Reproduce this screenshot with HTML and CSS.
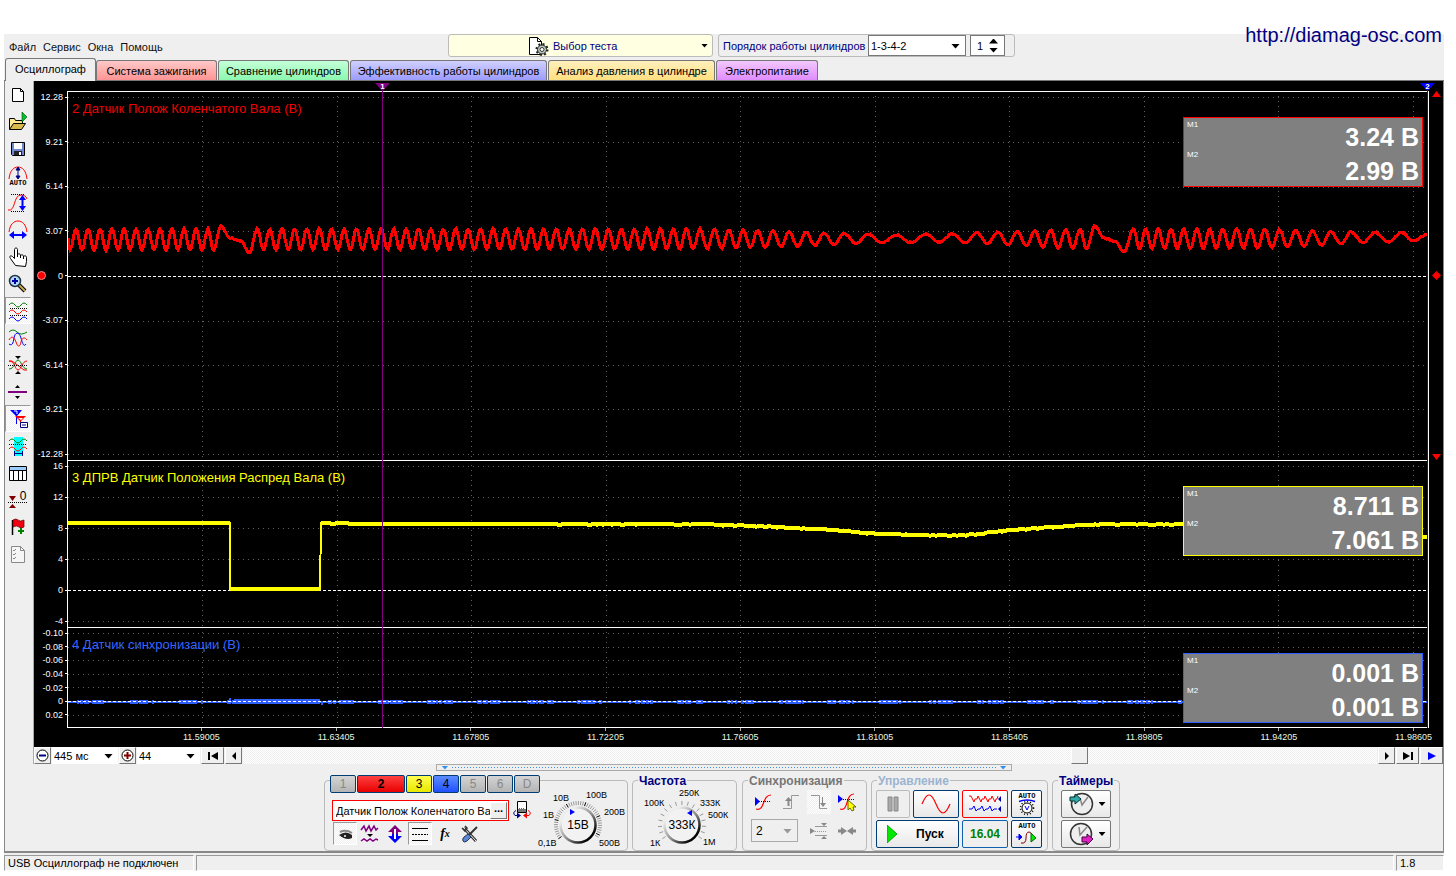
FILE: index.html
```html
<!DOCTYPE html>
<html lang="ru">
<head>
<meta charset="utf-8">
<title>Осциллограф</title>
<link rel="stylesheet" href="styles.css">
</head>
<body>
<a class="site-link" href="http://diamag-osc.com">http://diamag-osc.com</a>
<div class="app">
  <header class="topbar">
    <nav class="menu">
      <a href="#file">Файл</a><a href="#service">Сервис</a><a href="#windows">Окна</a><a href="#help">Помощь</a>
    </nav>
    <button class="test-select" type="button">
      <svg width="22" height="20" viewBox="0 0 22 20"><path d="M1.500 1.500h8l4 4v13h-12z" fill="#fff" stroke="#000"/><path d="M9.500 1.500v4h4" fill="none" stroke="#000"/><circle cx="14" cy="13.500" r="4.500" fill="#b8c8b8" stroke="#222" stroke-width="1"/><circle cx="14" cy="13.500" r="5.500" fill="none" stroke="#222" stroke-width="2" stroke-dasharray="2 2.300"/><circle cx="14" cy="13.500" r="2" fill="#fff" stroke="#333"/></svg>
      <span>Выбор теста</span><i class="arrow"></i>
    </button>
    <div class="firing">
      <label for="order">Порядок работы цилиндров</label>
      <span class="drop order"><select id="order"><option>1-3-4-2</option></select></span>
      <span class="spin"><input aria-label="Номер цилиндра" value="1"><span class="spin-btns"><button type="button" aria-label="Больше"></button><button type="button" aria-label="Меньше"></button></span></span>
    </div>
  </header>

  <nav class="tabs">
    <button class="tab active" type="button">Осциллограф</button>
    <button class="tab t-red" type="button">Система зажигания</button>
    <button class="tab t-green" type="button">Сравнение цилиндров</button>
    <button class="tab t-blue" type="button">Эффективность работы цилиндров</button>
    <button class="tab t-gold" type="button">Анализ давления в цилиндре</button>
    <button class="tab t-violet" type="button">Электропитание</button>
  </nav>

  <main class="frame">
    <div class="work">
      <aside class="tools">
        <button type="button" aria-label="Новый"><svg viewBox="0 0 22 22"><path d="M5.500 4.500h8l3 3v10h-11z" fill="#fff" stroke="#000"/><path d="M13.500 4.500v3h3" fill="none" stroke="#000"/></svg></button>
        <button type="button" aria-label="Открыть"><svg viewBox="0 0 22 22"><path d="M2.500 18.500v-11h5l1 2h7v3" fill="#ffe98c" stroke="#000"/><path d="M2.500 18.500l4-6h12l-4 6z" fill="#d8b84a" stroke="#000"/><path d="M15 1l5 5-5 5z" fill="#00c030" stroke="#040" stroke-width=".6"/></svg></button>
        <button type="button" aria-label="Сохранить"><svg viewBox="0 0 22 22"><path d="M4.500 4.500h13v13h-12l-1-1z" fill="#7088d0" stroke="#000"/><path d="M7 5h8v6H7z" fill="#fff"/><path d="M7 13h8v4H7z" fill="#222"/><path d="M12 14h2v3h-2z" fill="#fff"/></svg></button>
        <button type="button" aria-label="Авто"><svg viewBox="0 0 22 22"><path d="M2 14C3 5 7 2 11 2s8 3 9 12" fill="none" stroke="#f00"/><path d="M11 3v10M9 5l2-3 2 3zM9 11l2 3 2-3z" stroke="#000080" fill="#000080"/><text x="11" y="20" class="ico-text">AUTO</text></svg></button>
        <button type="button" aria-label="Амплитуда"><svg viewBox="0 0 22 22"><path d="M4 2.500h14M4 19.500h14" stroke="#000" stroke-dasharray="1 1"/><path d="M1 18c8 2 5-15 13-15 3 0 5 1 6 4" fill="none" stroke="#f00"/><path d="M15.500 5v12" stroke="#00f" stroke-width="2"/><path d="M12 8l3.500-5L19 8zM12 14l3.500 5 3.500-5z" fill="#00f"/></svg></button>
        <button type="button" aria-label="Развёртка"><svg viewBox="0 0 22 22"><path d="M2 13C3 5 7 2 11 2s8 3 9 11" fill="none" stroke="#f00"/><path d="M4 16h14" stroke="#00f" stroke-width="2"/><path d="M7 12l-5 4 5 4zM15 12l5 4-5 4z" fill="#00f"/></svg></button>
        <button type="button" aria-label="Рука"><svg viewBox="0 0 22 22"><path d="M8.500 19.500l-5-7c-2-3 1-3 2-2l2 2v-9c0-2 3-2 3 0v5c1-1 3-1 3 1 1-1 3-1 3 1 1-1 3-1 3 1v4c0 2-1 3-1 5z" fill="#fff" stroke="#000"/><path d="M10.500 8v3M13.500 9v3M16.500 10v3" stroke="#000"/></svg></button>
        <button type="button" aria-label="Масштаб"><svg viewBox="0 0 22 22"><path d="M12 12l6 6" stroke="#000" stroke-width="4"/><path d="M12 12l6 6" stroke="#c8a850" stroke-width="2"/><circle cx="8" cy="8" r="5.500" fill="#b0dcff" stroke="#234" stroke-width="1.500"/><path d="M8 5v6M5 8h6" stroke="#00a" stroke-width="2"/></svg></button>
        <button type="button" class="pressed" aria-label="Раздельно"><svg viewBox="0 0 22 22"><g fill="none"><path d="M2 5q3-4 6 0t6 0t6 0" stroke="#008000"/><path d="M2 12q3-4 6 0t6 0t6 0" stroke="#f00"/><path d="M2 19q3-4 6 0t6 0t6 0" stroke="#00f"/><path d="M3 8.500h17M3 15.500h17" stroke="#000" stroke-dasharray="1 1"/></g></svg></button>
        <button type="button" aria-label="Совместно"><svg viewBox="0 0 22 22"><g fill="none"><path d="M2 5q4-4 8 0t10 0" stroke="#008000"/><path d="M2 17c3 2 4 0 5-6s5-7 7 0 3 9 5 6" stroke="#00f"/><path d="M2 13c2-4 5-4 7 2s4 5 5 0 4-5 6-2" stroke="#f00"/></g></svg></button>
        <button type="button" aria-label="Центр"><svg viewBox="0 0 22 22"><path d="M2 7h3l12 9h3" fill="none" stroke="#f00"/><path d="M2 15c6 0 6-9 9-9s4 9 9 9" fill="none" stroke="#008000"/><path d="M2 7c6 0 6 9 9 9s4-9 9-9" fill="none" stroke="#f00"/><path d="M1 11.500h20" stroke="#000" stroke-dasharray="1 1"/><path d="M8 2h6l-3 3zM8 20h6l-3-3z"/></svg></button>
        <button type="button" aria-label="Разделитель"><svg viewBox="0 0 22 22"><path d="M1 11h19" stroke="#800080" stroke-width="2"/><path d="M8 7h5l-2.500-3zM8 15h5l-2.500 3z"/></svg></button>
        <button type="button" class="pressed" aria-label="Маркеры"><svg viewBox="0 0 22 22"><path d="M3 2h12l-5 6v8H9V8z" fill="#00f"/><path d="M7 3h3v3" fill="none" stroke="#fff"/><path d="M8 8h11l-5 5v5h-1v-5z" fill="#f00"/><path d="M11 10h5l-2 2z" fill="#fff"/><path d="M13.500 14.500h7v5h-7z" fill="#fff" stroke="#000080"/><path d="M15 17h4" stroke="#000080"/></svg></button>
        <button type="button" aria-label="Участок"><svg viewBox="0 0 22 22"><path d="M7 2h9v19H7z" fill="#0ff"/><g fill="none"><path d="M2 6q3-4 6 0t6 0t6 0" stroke="#008000"/><path d="M2 14q3-4 6 0t6 0t6 0" stroke="#f00"/><path d="M2 9.500h18" stroke="#000" stroke-dasharray="1 1"/><path d="M7.500 16v5M15.500 16v5M8 18.500h7" stroke="#000080"/></g></svg></button>
        <button type="button" aria-label="Таблица"><svg viewBox="0 0 22 22"><path d="M2.500 4.500h17v14h-17z" fill="#fff" stroke="#000"/><path d="M3 5h16v3H3z" fill="#9cf"/><path d="M2 8.500h18M6.500 8v10M11.500 8v10M15.500 8v10" stroke="#000"/></svg></button>
        <button type="button" aria-label="Ноль"><svg viewBox="0 0 22 22"><path d="M2 7h7L5.500 12zM2 19h7l-3.500-4z" fill="#800000"/><path d="M1 13.500h19" stroke="#000" stroke-dasharray="1 1"/><text x="16" y="11" class="ico-zero">0</text></svg></button>
        <button type="button" aria-label="Флаг"><svg viewBox="0 0 22 22"><path d="M5.500 4v15" stroke="#000" stroke-width="1.500"/><path d="M6 4q3-2 5 0t6 0v7q-3 2-5 0t-6 0z" fill="#f00010" stroke="#600" stroke-width=".7"/><path d="M14 12v6M11 15h6" stroke="#008000" stroke-width="2"/></svg></button>
        <button type="button" aria-label="Отчёт"><svg viewBox="0 0 22 22"><path d="M4.500 3.500h9l4 4v12h-13z" fill="#f6f6f6" stroke="#888"/><path d="M13.500 3.500v4h4M6 7l1 1 2-2M6 11l1 1 2-2M6 15l1 1 2-2" fill="none" stroke="#888"/></svg></button>
      </aside>

      <section class="scope-col">
        <div class="scope">
          <div class="yaxis row1"><i class="zero-dot"></i><ol class="ticks"><li>12.28</li><li>9.21</li><li>6.14</li><li>3.07</li><li>0</li><li>-3.07</li><li>-6.14</li><li>-9.21</li><li>-12.28</li></ol></div>
          <div class="pane row1">
            <svg class="trace" viewBox="68 92 1360 368" preserveAspectRatio="none"><g class="grid" id="grid1"></g><path id="crank" class="line-red"/></svg>
            <h2 class="name red">2 Датчик Полож Коленчатого Вала (В)</h2>
            <div class="readout red-box"><div class="marks"><span>M1</span><span>M2</span></div><div class="vals"><b>3.24 В</b><b>2.99 В</b></div></div>
          </div>
          <div class="limits row1"><svg width="9" height="6"><path d="M0 6L4.500 0 9 6z"/></svg><svg width="9" height="9"><path d="M0 4.500L4.500 0 9 4.500 4.500 9z"/></svg><svg width="9" height="6"><path d="M0 0h9L4.500 6z"/></svg></div>

          <div class="yaxis row2"><ol class="ticks"><li>16</li><li>12</li><li>8</li><li>4</li><li>0</li><li>-4</li></ol></div>
          <div class="pane row2">
            <svg class="trace" viewBox="68 461 1360 166" preserveAspectRatio="none"><g class="grid" id="grid2"></g><path id="cam" class="line-yellow"/><path d="M230 522V590M320 590L321 522" class="edge-yellow"/></svg>
            <h2 class="name yellow">3 ДПРВ Датчик Положения Распред Вала (В)</h2>
            <div class="readout yellow-box"><div class="marks"><span>M1</span><span>M2</span></div><div class="vals"><b>8.711 В</b><b>7.061 В</b></div></div>
          </div>

          <div class="yaxis row3"><ol class="ticks"><li>-0.10</li><li>-0.08</li><li>-0.06</li><li>-0.04</li><li>-0.02</li><li>0</li><li>0.02</li></ol></div>
          <div class="pane row3">
            <svg class="trace" viewBox="68 628 1360 99" preserveAspectRatio="none"><path id="sync" class="line-blue"/><g class="grid" id="grid3"></g></svg>
            <h2 class="name blue">4 Датчик синхронизации (В)</h2>
            <div class="readout blue-box"><div class="marks"><span>M1</span><span>M2</span></div><div class="vals"><b>0.001 В</b><b>0.001 В</b></div></div>
          </div>

          <div class="xline"></div>
          <ol class="xaxis"><li>11.59005</li><li>11.63405</li><li>11.67805</li><li>11.72205</li><li>11.76605</li><li>11.81005</li><li>11.85405</li><li>11.89805</li><li>11.94205</li><li>11.98605</li></ol>
          <div class="cursors"><div class="cursor c1"><span>1</span></div><div class="cursor c2"><span>2</span></div></div>
        </div>

        <div class="scroll-row">
          <button class="b3d sq" type="button" aria-label="Уменьшить"><svg width="13" height="13"><circle cx="6.500" cy="6.500" r="5.500" fill="#fff" stroke="#000"/><path d="M3 6.500h7" stroke="#000080" stroke-width="2"/></svg></button>
          <span class="drop span-t"><select aria-label="Развёртка времени"><option>445 мс</option></select></span>
          <button class="b3d sq" type="button" aria-label="Увеличить"><svg width="13" height="13"><circle cx="6.500" cy="6.500" r="5.500" fill="#fff" stroke="#000"/><path d="M3 6.500h7M6.500 3v7" stroke="#800000" stroke-width="2"/></svg></button>
          <span class="drop span-n"><select aria-label="Деление"><option>44</option></select></span>
          <button class="b3d wide" type="button" aria-label="В начало"><svg width="12" height="8"><path d="M1 0h2v8H1zM11 0v8L4 4z"/></svg></button>
          <button class="b3d sq" type="button" aria-label="Назад"><svg width="6" height="8"><path d="M5 0v8L1 4z"/></svg></button>
          <input class="track" type="range" aria-label="Позиция" min="0" max="1000" value="741">
          <button class="b3d sq" type="button" aria-label="Вперёд"><svg width="6" height="8"><path d="M1 0v8l4-4z"/></svg></button>
          <button class="b3d wide" type="button" aria-label="В конец"><svg width="12" height="8"><path d="M1 0v8l7-4zM9 0h2v8H9z"/></svg></button>
          <button class="b3d wide" type="button" aria-label="Воспроизвести"><svg width="10" height="8"><path d="M1 0v8l8-4z" fill="#00f"/></svg></button>
        </div>
      </section>
    </div>

    <div class="splitter"><i></i><span></span><i></i></div>

    <div class="panel">
      <section class="group channel">
        <div class="ch-left">
          <div class="ch-btns">
            <button type="button" class="off">1</button><button type="button" class="ch2">2</button><button type="button" class="ch3">3</button><button type="button" class="ch4">4</button><button type="button" class="off">5</button><button type="button" class="off">6</button><button type="button" class="off">D</button>
          </div>
          <div class="ch-name">
            <span class="field"><input aria-label="Имя канала" value="Датчик Полож Коленчатого Вала"><button type="button" class="b3d dots">...</button></span>
            <svg width="20" height="20" viewBox="0 0 20 20"><path d="M5.500 1.500h9v11h-9z" fill="#fff" stroke="#000"/><path d="M6 9h8v3H6z" fill="#777"/><path d="M7 8.500h6" stroke="#0a0" stroke-dasharray="1 1"/><path d="M4 10.500q-4 2-1 5h3" stroke="#000080" fill="none"/><path d="M5 12.500l4 3-4 3z" fill="#000080"/><path d="M16 10.500q4 2 1 5h-3" stroke="#f00" fill="none"/><path d="M15 12.500l-4 3 4 3z" fill="#f00"/></svg>
          </div>
          <div class="ch-tools">
            <button type="button" class="pressed" aria-label="Видимость"><svg viewBox="0 0 20 20"><path d="M5 8q6-3 12 1" fill="none" stroke="#888" stroke-width="2"/><path d="M4 11q7-5 13 0v3q-6 3-13-3z" fill="#222"/><circle cx="10" cy="12" r="1" fill="#fff"/></svg></button>
            <button type="button" aria-label="Сглаживание"><svg viewBox="0 0 20 20"><path d="M1 6l3-4 2 5 3-5 2 5 3-5 2 4 2-2M1 17l3-2 3 2 3-2 3 2 3-2 2 1" fill="none" stroke="#800080" stroke-width="1.500"/><path d="M7 10h6l-3 3z"/></svg></button>
            <button type="button" aria-label="Смещение"><svg viewBox="0 0 20 20"><path d="M10 1l7 7h-4v2H7V8H3z" fill="#800080"/><path d="M10 19l7-7h-4v-2H7v2H3z" fill="#00f"/><path d="M10 5v10" stroke="#fff" stroke-width="2"/></svg></button>
            <button type="button" class="pressed" aria-label="Линии"><svg viewBox="0 0 20 20"><path d="M2 4.500h16M2 16.500h16" stroke="#000"/><path d="M2 10.500h16" stroke="#000" stroke-dasharray="2 1"/></svg></button>
            <button type="button" class="fx" aria-label="Функция"><i>f</i><small>x</small></button>
            <button type="button" aria-label="Настройка"><svg viewBox="0 0 20 20"><path d="M4 4l12 13" stroke="#333" stroke-width="3"/><path d="M4 4l12 13" stroke="#eee"/><path d="M2 4l3 3 2-3-2-2" fill="none" stroke="#333" stroke-width="1.500"/><path d="M17 3l-9 9" stroke="#333" stroke-width="2"/><path d="M8 10l3 3-4 4q-3 2-4 0t1-4z" fill="#5b86d0" stroke="#235"/></svg></button>
          </div>
        </div>
        <svg class="knob" width="87" height="69" viewBox="540 781 87 69" data-cx="578" data-cy="825" data-dot="-8 -13">
          <text x="538" y="846">0,1В</text><text x="543" y="818">1В</text><text x="553" y="801">10В</text><text x="586" y="798">100В</text><text x="604" y="815">200В</text><text x="599" y="846">500В</text><text class="kv" x="578" y="829">15В</text>
        </svg>
      </section>

      <section class="group freq">
        <h3>Частота</h3>
        <svg class="knob" width="103" height="62" viewBox="633 788 103 62" data-cx="682" data-cy="825" data-dot="8 -12">
          <text x="650" y="846">1К</text><text x="644" y="806">100К</text><text x="679" y="796">250К</text><text x="700" y="806">333К</text><text x="708" y="818">500К</text><text x="703" y="845">1М</text><text class="kv" x="682" y="829">333К</text>
        </svg>
      </section>

      <section class="group sync">
        <h3 class="dim">Синхронизация</h3>
        <div class="sync-grid">
          <button type="button" aria-label="Синхронизация"><svg viewBox="0 0 20 20"><path d="M3 17c9 3 6-14 15-14" fill="none" stroke="#f00" stroke-width="1.200"/><path d="M4 9.500h14" stroke="#00a" stroke-dasharray="1 1"/><path d="M2 5l5 4.500L2 14z" fill="#00f"/></svg></button>
          <button type="button" aria-label="По фронту"><svg viewBox="0 0 20 20"><path d="M2 16.500h8.500v-13H18" fill="none" stroke="#999"/><path d="M7.500 14V7" stroke="#888" stroke-width="2"/><path d="M4 9l3.500-4L11 9z" fill="#888"/></svg></button>
          <button type="button" class="hatch" aria-label="По спаду"><svg viewBox="0 0 20 20"><path d="M2 3.500h8.500v13H18" fill="none" stroke="#999"/><path d="M13.500 5v8" stroke="#888"/><path d="M11 11h6l-3 4z" fill="#888"/></svg></button>
          <button type="button" aria-label="Выбор уровня"><svg viewBox="0 0 20 20"><path d="M3 17c9 3 5-15 14-15" fill="none" stroke="#f00" stroke-width="1.200"/><path d="M2 7.500h16" stroke="#00a" stroke-dasharray="1 1"/><path d="M1 3l5 4-5 4z" fill="#00f"/><path d="M11 8v10l2-2 2 3 2-1-1-3h3z" fill="#ff0" stroke="#440" stroke-width=".8"/></svg></button>
          <span class="drop sync-ch"><select aria-label="Канал синхронизации"><option>2</option></select></span>
          <button type="button" aria-label="Уровень"><svg viewBox="0 0 20 20"><path d="M6 5.500h12M6 14.500h12" stroke="#999"/><path d="M6 10.500h12" stroke="#999" stroke-dasharray="1 1"/><path d="M1 7l5 3-5 3zM12 2h6l-3 3zM12 18h6l-3-3z" fill="#888"/></svg></button>
          <button type="button" aria-label="Сжать"><svg viewBox="0 0 20 20"><path d="M1 10h4M15 10h4" stroke="#888" stroke-width="3"/><path d="M4 6l6 4-6 4zM16 6l-6 4 6 4z" fill="#888"/></svg></button>
        </div>
      </section>

      <section class="group control">
        <h3 class="pale">Управление</h3>
        <div class="ctl-grid">
          <button class="cbtn gray" type="button" aria-label="Пауза"><svg width="14" height="18"><path d="M2 2h4v14H2zM8 2h4v14H8z" fill="#aaa" stroke="#888"/></svg></button>
          <button class="cbtn" type="button" aria-label="Один кадр"><svg width="30" height="20"><path d="M1 10C6-2 10-2 15 10s9 12 14 0" fill="none" stroke="#f00" stroke-width="1.200"/></svg></button>
          <button class="cbtn redb" type="button" aria-label="Запись"><svg width="34" height="20"><path d="M1 2h2l3 6 1-3h2l1-3 3 6 1-3h2l1-3 3 6 1-3h2l1-3 3 6 1-3h1l1-3" fill="none" stroke="#f00"/><path d="M1 15h3l2-3 2 5 2-2h2l2-3 2 5 2-2h2l2-3 2 5 2-2h3" fill="none" stroke="#00f"/><path d="M33 2v6l-3-3zM33 12v6l-3-3z" fill="#00a"/></svg></button>
          <button class="cbtn" type="button" aria-label="Авто масштаб"><svg width="24" height="24"><text x="12" y="6" class="ico-text">AUTO</text><path d="M4 9.500q8-3 16 0" stroke="#00f" fill="none" stroke-width="1.500"/><circle cx="12" cy="16" r="5" fill="#fff" stroke="#000"/><circle cx="12" cy="16" r="6.500" fill="none" stroke="#000" stroke-width="1.500" stroke-dasharray="1 2"/><path d="M10 14l2 4 2-4" fill="none" stroke="#00f"/></svg></button>
          <button class="cbtn start" type="button"><svg width="10" height="18"><path d="M0 0v18l10-9z" fill="#00e800" stroke="#0a0"/></svg><b>Пуск</b></button>
          <button class="cbtn ver" type="button">16.04</button>
          <button class="cbtn" type="button" aria-label="Авто запуск"><svg width="24" height="24"><text x="12" y="6" class="ico-text">AUTO</text><path d="M6 21q5 1 5-5t3-6 4 7" fill="none" stroke="#800000"/><path d="M1 15h4M4 12l3 3-3 3z" fill="#00f" stroke="#00f"/><path d="M16 11v9l5-4z" fill="#0e0" stroke="#060"/></svg></button>
        </div>
      </section>

      <section class="group timers">
        <h3>Таймеры</h3>
        <div class="timer-list">
          <button class="cbtn tm" type="button" aria-label="Таймер начала"><svg width="28" height="24"><circle cx="15" cy="12" r="10.500" fill="#eee" stroke="#333" stroke-width="1.500"/><path d="M13 6l2 7 6-8" stroke="#888" fill="none" stroke-width="1.500"/><path d="M3 5h5V2l6 5-6 5V9H3z" fill="#3aa" stroke="#033"/></svg><i class="arrow"></i></button>
          <button class="cbtn tm" type="button" aria-label="Таймер конца"><svg width="28" height="24"><circle cx="14" cy="12" r="10.500" fill="#eee" stroke="#333" stroke-width="1.500"/><path d="M12 5l1 8 7-8" stroke="#888" fill="none" stroke-width="1.500"/><path d="M15 15h5v-3l6 5-6 6v-3h-5z" fill="#e020c0" stroke="#404"/></svg><i class="arrow"></i></button>
        </div>
      </section>
    </div>
  </main>

  <footer class="status"><span class="s1">USB Осциллограф не подключен</span><span class="s2"></span><span class="s3">1.8</span></footer>
</div>
<script src="scope.js"></script>
</body>
</html>
```
FILE: styles.css
```css
* { box-sizing: border-box; }
body {
  margin: 0;
  padding: 34px 12px 5px 4px;
  min-height: 100vh;
  display: flex;
  flex-direction: column;
  background: #fff;
  font: 11px/14px "Liberation Sans", Arial, sans-serif;
  color: #000;
}
button, input, select { font: inherit; color: inherit; margin: 0; }
button { padding: 0; background: none; border: 0; display: flex; align-items: center; justify-content: center; white-space: nowrap; }
ol { list-style: none; margin: 0; padding: 0; }
h2, h3 { margin: 0; }
.site-link {
  position: absolute;
  top: 23px;
  right: 14px;
  font-size: 20px;
  line-height: 24px;
  color: #000080;
  text-decoration: none;
}
.app { flex: 1; display: flex; flex-direction: column; background: #efefef; }

/* top bar */
.topbar { display: flex; height: 24px; align-items: flex-start; }
.menu { display: flex; gap: 7px; padding: 6px 0 0 5px; width: 444px; }
.menu a { color: #111; text-decoration: none; }
.test-select {
  width: 265px; height: 23px;
  background: #ffffe1;
  border: 1px solid #bbb; border-radius: 3px;
  color: #000080;
  gap: 3px;
  padding-left: 79px;
}
.test-select .arrow { margin: 0 4px 0 auto; }
.test-select svg { flex: none; }
.arrow { width: 7px; height: 4px; background: #000; clip-path: polygon(0 0, 100% 0, 50% 100%); }
.firing {
  display: flex; align-items: center;
  margin-left: 5px; height: 23px; width: 297px;
  border: 1px solid #bbb; border-radius: 3px;
  padding-left: 4px;
  color: #000080;
}
.firing .order { width: 98px; height: 21px; margin-left: auto; border: 1px solid #777; }
.drop { position: relative; display: flex; color: #000; }
.drop select { appearance: none; width: 100%; height: 100%; border: 0; border-radius: 0; background: #fff; padding: 0 2px; }
.drop::after {
  content: ""; position: absolute; right: 5px; top: 50%; margin-top: -2px;
  width: 9px; height: 5px; background: #000;
  clip-path: polygon(0 0, 100% 0, 50% 100%);
}
.spin { display: flex; width: 35px; height: 21px; margin: 0 9px 0 4px; border: 1px solid #777; background: #fff; color: #000; }
.spin input { width: 18px; border: 0; padding: 0 0 0 6px; background: none; }
.spin-btns { display: flex; flex-direction: column; justify-content: center; gap: 4px; }
.spin-btns button { width: 9px; height: 5px; background: #000; clip-path: polygon(50% 0, 100% 100%, 0 100%); }
.spin-btns button + button { clip-path: polygon(0 0, 100% 0, 50% 100%); }

/* tabs */
.tabs { display: flex; align-items: flex-end; height: 23px; gap: 1px; padding-left: 1px; border-bottom: 1px solid #777; }
.tab {
  height: 20px;
  border: 1px solid #777; border-bottom: 0; border-radius: 3px 3px 0 0;
}
.tab.active { height: 23px; width: 91px; margin-bottom: -1px; background: #efefef; padding-bottom: 2px; }
.tab.active + .tab { margin-left: -1px; }
.t-red { background: linear-gradient(#ffc8c8, #ff9494); width: 121px; }
.t-green { background: linear-gradient(#c4ffd8, #8cf8b0); width: 131px; }
.t-blue { background: linear-gradient(#d0d0ff, #9c9cff); width: 197px; }
.t-gold { background: linear-gradient(#fff0bc, #ffdf80); width: 167px; }
.t-violet { background: linear-gradient(#f2c8ff, #e08cff); width: 102px; }

/* frame */
.frame { flex: 1; display: flex; flex-direction: column; border: 1px solid #888; border-width: 0 1px 2px; }
.work { flex: 1; display: flex; }
.tools { width: 29px; display: flex; flex-direction: column; border-right: 1px solid #aaa; }
.tools button { height: 27px; width: 26px; }
.tools svg { width: 22px; height: 22px; }
.tools .pressed, .ch-tools .pressed { border: 1px solid; border-color: #999 #fff #fff #999; }
.pressed, .hatch { background: conic-gradient(#fff 25%, #efefef 0 50%, #fff 0 75%, #efefef 0) 0 0 / 2px 2px; }
.ico-text { font: bold 7px "Liberation Mono", monospace; text-anchor: middle; }
.ico-zero { font: 12px "Liberation Sans", sans-serif; text-anchor: middle; }

/* oscilloscope */
.scope-col { flex: 1; display: flex; flex-direction: column; min-width: 0; }
.scope {
  flex: 1;
  display: grid;
  grid-template-columns: 33px 1fr 14px;
  grid-template-rows: 10px 369fr 167fr 100fr 1px 19px;
  background: #000;
  color: #fff;
}
.row1 { grid-row: 2; } .row2 { grid-row: 3; } .row3 { grid-row: 4; }
.yaxis { grid-column: 1; display: grid; }
.yaxis > * { grid-area: 1 / 1; }
.zero-dot { width: 9px; height: 9px; border-radius: 50%; background: #f00; border: 1px solid #f88; align-self: center; margin-left: 3px; }
.ticks { display: flex; flex-direction: column; justify-content: space-between; font-size: 9px; }
.ticks li { display: flex; align-items: center; justify-content: flex-end; height: 12px; line-height: 12px; gap: 2px; }
.ticks li::after { content: ""; width: 2px; height: 1px; background: #fff; }
.row3 .ticks { padding-bottom: 6px; }
.pane { grid-column: 2; position: relative; border: 1px solid #fff; border-bottom: 0; display: flex; justify-content: space-between; align-items: flex-start; }
.trace { position: absolute; inset: 0; width: 100%; height: 100%; shape-rendering: crispEdges; }
.trace path { fill: none; }
.grid path { stroke: #606060; stroke-dasharray: 1 4; }
.grid path.zero { stroke: #fff; stroke-dasharray: 3 2; }
.line-red { stroke: #f00; stroke-width: 3; }
.line-yellow { stroke: #ff0; stroke-width: 4; }
.edge-yellow { stroke: #ff0; stroke-width: 2; }
.line-blue { stroke: #2f60ff; stroke-width: 2; }
.name { position: relative; padding: 8px 0 0 4px; font-weight: normal; font-size: 13px; line-height: 18px; }
.red { color: #f00000; } .yellow { color: #ff0; } .blue { color: #3264ff; }
.readout {
  position: relative; width: 240px; height: 70px; margin: 25px 5px 0 0;
  background: #808080; border: 1px solid;
  display: flex; justify-content: space-between;
}
.marks { display: flex; flex-direction: column; gap: 18px; padding: 1px 3px; font-size: 8px; line-height: 12px; color: #fff; }
.vals { display: flex; flex-direction: column; padding: 2px 3px; color: #fff; font-size: 25px; line-height: 34px; text-align: right; }
.red-box { border-color: #f00; } .yellow-box { border-color: #ff0; } .blue-box { border-color: #2f60ff; }
.limits { grid-column: 3; display: flex; flex-direction: column; justify-content: space-between; align-items: center; fill: #f00; }
.xline { grid-column: 2; grid-row: 5; background: #fff; }
.xaxis { grid-column: 2 / 4; grid-row: 6; display: flex; justify-content: space-between; padding: 0 11px 0 116px; font-size: 9px; color: #e8f8e0; }
.xaxis li { display: flex; flex-direction: column; align-items: center; line-height: 12px; }
.xaxis li::before { content: ""; width: 1px; height: 3px; background: #aaa; }
.cursors { grid-column: 2; grid-row: 1 / 6; position: relative; }
.cursor { position: absolute; top: 8px; bottom: 0; width: 1px; }
.cursor span {
  position: absolute; left: -7px; top: -6px; width: 15px; height: 8px;
  background: inherit; clip-path: polygon(0 0, 100% 0, 50% 100%);
  font-size: 8px; line-height: 8px; font-weight: bold; text-align: center; color: #fff;
}
.c1 { left: 23.13%; background: #800080; }
.c2 { left: 99.85%; background: #00f; }

/* scroll row */
.scroll-row { display: flex; height: 17px; gap: 1px; }
.b3d { background: #efefef; border: 1px solid; border-color: #fff #777 #777 #fff; }
.sq { width: 17px; flex: none; }
.wide { width: 23px; flex: none; }
.span-t { width: 66px; } .span-n { width: 63px; }
.track {
  flex: 1; min-width: 0; appearance: none; height: 17px;
  background: conic-gradient(#fff 25%, #efefef 0 50%, #fff 0 75%, #efefef 0) 0 0 / 2px 2px;
}
.track::-webkit-slider-thumb {
  appearance: none; width: 17px; height: 17px;
  background: #efefef; border: 1px solid; border-color: #fff #777 #777 #fff;
}

/* bottom panel */
.splitter {
  align-self: center; width: 40%; height: 7px;
  border: 1px solid #aaa;
  display: flex; align-items: center; gap: 4px; padding: 0 4px;
}
.splitter i { width: 7px; height: 4px; background: #2f90f0; clip-path: polygon(0 0, 100% 0, 50% 100%); }
.splitter span { flex: 1; height: 1px; background: repeating-linear-gradient(90deg, #4090e8 0 1px, transparent 1px 3px); }
.panel { display: flex; justify-content: center; gap: 4px; padding: 9px 4px 0 0; }
.group { border: 1px solid #bbb; border-radius: 4px; height: 71px; }
h3 { width: max-content; margin: -7px 0 0 5px; padding: 0 1px; background: #efefef; color: #000080; font-size: 12px; line-height: 14px; }
h3.dim { color: #777; } h3.pale { color: #9cb4d0; }
.channel { width: 304px; display: flex; padding-left: 5px; }
.ch-left { width: 210px; }
.ch-btns { display: flex; gap: 1px; margin-top: -6px; background: #efefef; }
.ch-btns button { flex: 1; height: 18px; border: 1px solid #003c74; border-radius: 2px; font-size: 12px; }
.ch-btns .off { background: linear-gradient(#d4d4d4, #b4b4b4); color: #888; }
.ch-btns .ch2 { flex: none; width: 48px; font-weight: bold; background: linear-gradient(#ff4040, #e80000); }
.ch-btns .ch3 { background: linear-gradient(#ffff50, #e8e800); }
.ch-btns .ch4 { background: linear-gradient(#5c8cff, #2050ff); }
.ch-name { display: flex; gap: 3px; padding: 7px 0 0 2px; }
.field { display: flex; width: 177px; height: 21px; border: 1px solid #f00; background: #fff; padding: 1px; }
.field input { flex: 1; min-width: 0; border: 0; padding: 0 0 0 2px; background: none; }
.dots { width: 17px; font-weight: bold; padding-bottom: 5px; }
.ch-tools { display: flex; padding: 1px 0 0 3px; gap: 1px; }
.ch-tools button { width: 24px; height: 23px; }
.ch-tools svg { width: 20px; height: 20px; }
.ch-tools .fx { font: bold 14px/16px "Liberation Serif", serif; }
.fx small { font-size: 10px; font-style: italic; }
.knob { display: block; overflow: visible; font-size: 9px; }
.knob .kv { font-size: 12px; text-anchor: middle; }
.freq { width: 105px; }
.sync { width: 125px; margin-left: 1px; }
.sync-grid { display: grid; grid-template-columns: repeat(4, 24px); column-gap: 4px; row-gap: 5px; padding: 2px 0 0 8px; }
.sync-grid button { width: 24px; height: 24px; }
.sync-grid svg { width: 20px; height: 20px; }
.sync-ch { grid-column: 1 / 3; width: 47px; height: 23px; border: 1px solid #aaa; }
.sync-ch select { background: #efefef; padding-left: 4px; font-size: 12px; }
.sync-ch::after { background: #999; }
.control { width: 177px; }
.ctl-grid { display: grid; grid-template-columns: 34px 46px 46px 31px; gap: 2px 3px; padding: 2px 0 0 4px; }
.cbtn { height: 28px; border: 1px solid #003c74; border-radius: 2px; background: linear-gradient(#fff, #e8e8e8); }
.gray { border-color: #bbb; background: #efefef; }
.redb { border-color: #f00; }
.start { grid-column: 1 / 3; justify-content: flex-start; padding-left: 10px; gap: 19px; font-size: 12px; }
.ver { border-color: #1060b0; background: #efefef; color: #008000; font-weight: bold; font-size: 12px; }
.timers { width: 68px; }
.timer-list { display: flex; flex-direction: column; gap: 2px; padding: 2px 0 0 8px; }
.tm { width: 50px; border-color: #777; gap: 4px; }

/* status bar */
.status { display: flex; gap: 2px; height: 18px; padding-top: 2px; }
.status span { border: 1px solid; border-color: #999 #fff #fff #999; padding: 0 3px; }
.s1 { width: 190px; } .s2 { flex: 1; } .s3 { width: 48px; }
```
FILE: scope.js
```js
const NS = 'http://www.w3.org/2000/svg';
let seed = 7;
const rnd = () => (seed = (seed * 16807) % 2147483647) / 2147483647;

function grid(id, ys, zero, top, bottom) {
  const g = document.getElementById(id);
  const add = (d, cls) => {
    const p = document.createElementNS(NS, 'path');
    p.setAttribute('d', d);
    if (cls) p.setAttribute('class', cls);
    g.appendChild(p);
  };
  for (let i = 0; i < 10; i++) add(`M${Math.round(202 + i * 134.55) + 0.5} ${top}V${bottom}`);
  ys.forEach(y => add(`M68 ${y + 0.5}H1428`, y === zero ? 'zero' : ''));
}
grid('grid1', [97, 142, 187, 231, 276, 321, 365, 409, 454], 276, 96, 460);
grid('grid2', [466, 497, 528, 559, 590, 621], 590, 465, 627);
grid('grid3', [633, 647, 660, 674, 687, 701, 715], 701, 632, 727);

// crank sensor: extrema of the toothed wheel signal joined by half cosines
const interp = (pts, x) => {
  for (let i = 1; i < pts.length; i++) {
    if (x <= pts[i][0]) {
      const [a, b] = [pts[i - 1], pts[i]];
      return a[1] + (b[1] - a[1]) * (x - a[0]) / (b[0] - a[0]);
    }
  }
  return pts[pts.length - 1][1];
};
const hi = [[60, 229], [700, 229], [775, 231], [823, 233], [894, 235], [978, 233], [1035, 231], [1080, 229], [1260, 229], [1312, 231], [1351, 232], [1440, 233]];
const lo = [[60, 250], [700, 249], [800, 246], [870, 243], [940, 242], [1000, 244], [1042, 247], [1086, 249], [1260, 248], [1312, 246], [1351, 243], [1440, 241]];
function run(peaks) {
  const out = [];
  peaks.forEach((p, i) => {
    if (i) { const m = (p + peaks[i - 1]) / 2; out.push([m, interp(lo, m)]); }
    out.push([p, interp(hi, p)]);
  });
  return out;
}
const series = (from, step, n) => Array.from({ length: n }, (_, i) => from + step * i);
const part1 = series(76, 12, 12);
const part2 = [...series(257.3, 12.4, 17), ...series(468, 12.6, 8), ...series(569.3, 13, 10), ...series(700, 14.4, 5),
  773, 789, 806, 824, 844, 868, 896, 926, 953, 977, 998, 1017.5, 1035, 1050.7, 1065.7, 1080];
const part3 = [1133.5, 1145.7, 1158.3, 1171, 1183.7, 1197, 1209.7, 1222.7, 1236.7, 1250.3, 1264.7, 1279.3, 1295.7, 1312.3, 1330.7, 1351, 1375, 1401.7];
const pts = [[68, 239], [70, 250], ...run(part1), [213.5, 250], [221, 226], [230, 238], [241, 241], [249.3, 253],
  ...run(part2), [1086.5, 249], [1094.7, 226], [1104, 238], [1115, 241], [1124, 252], ...run(part3), [1413, 241], [1428, 234]];
let d = '', k = 0;
for (let x = 68; x <= 1428; x += 1) {
  while (k < pts.length - 2 && x > pts[k + 1][0]) k++;
  const [a, b] = [pts[k], pts[k + 1]];
  const t = Math.min(1, Math.max(0, (x - a[0]) / (b[0] - a[0])));
  const y = a[1] + (b[1] - a[1]) * (1 - Math.cos(Math.PI * t)) / 2 + (rnd() - 0.5);
  d += (d ? 'L' : 'M') + x + ' ' + y.toFixed(1);
}
document.getElementById('crank').setAttribute('d', d);

// camshaft sensor: high level, low pulse, high level with a slow sag
const cam = [[68, 523], [700, 524], [760, 526], [820, 529], [870, 533], [920, 535], [965, 535], [1000, 531], [1050, 527], [1100, 524], [1428, 524]];
const level = (from, to, f) => {
  let s = '';
  for (let x = from; x <= to; x += 3) s += `${s ? 'L' : 'M'}${x} ${(f(x) + (rnd() > 0.8 ? 0.8 : 0)).toFixed(1)}`;
  return s;
};
d = level(68, 230, () => 522.6) + level(230, 321, () => 588.6) + level(321, 1190, x => interp(cam, x)) + 'M1420 537H1428';
document.getElementById('cam').setAttribute('d', d);

// sync sensor: flat line with bursts of noise
d = 'M68 702H1428';
for (let x = 78; x < 1428; x++) {
  const burst = (x - 78) % 50 < 26;
  if (x > 234 && x < 320) d += `M${x} 699V704`;
  else if (burst && rnd() > 0.45) d += `M${x} 700V704`;
}
d += 'M229.500 698V704M322 701V705';
document.getElementById('sync').setAttribute('d', d);

// knobs: tick ring, dial, pointer
document.querySelectorAll('.knob').forEach((svg, n) => {
  const cx = +svg.dataset.cx, cy = +svg.dataset.cy;
  const [dx, dy] = svg.dataset.dot.split(' ').map(Number);
  let s = '';
  for (let a = -215; a <= 35; a += n ? 15.6 : 6) {
    const r = a * Math.PI / 180;
    const big = n === 0 && Math.abs(((a + 215) % 48)) < 3;
    s += `<path d="M${cx + 20 * Math.cos(r)} ${cy + 20 * Math.sin(r)}L${cx + 24 * Math.cos(r)} ${cy + 24 * Math.sin(r)}" stroke="${big ? '#000' : '#999'}"/>`;
  }
  s += `<defs><linearGradient id="kg${n}" x2="1" y2="1"><stop offset=".2" stop-color="#eee"/><stop offset=".55" stop-color="#888"/><stop offset=".85" stop-color="#000"/></linearGradient></defs>`;
  s += `<circle cx="${cx}" cy="${cy}" r="17.500" fill="#f2f2f2" stroke="url(#kg${n})" stroke-width="2.500"/>`;
  const px = cx + dx, py = cy + dy;
  s += n ? `<path d="M${px + 2} ${py - 3}v6l-5-3z" fill="#00f"/>` : `<path d="M${px} ${py - 3}v6l5-3z" fill="#00f"/>`;
  const g = document.createElementNS(NS, 'g');
  g.innerHTML = s;
  svg.insertBefore(g, svg.firstChild);
});
```
